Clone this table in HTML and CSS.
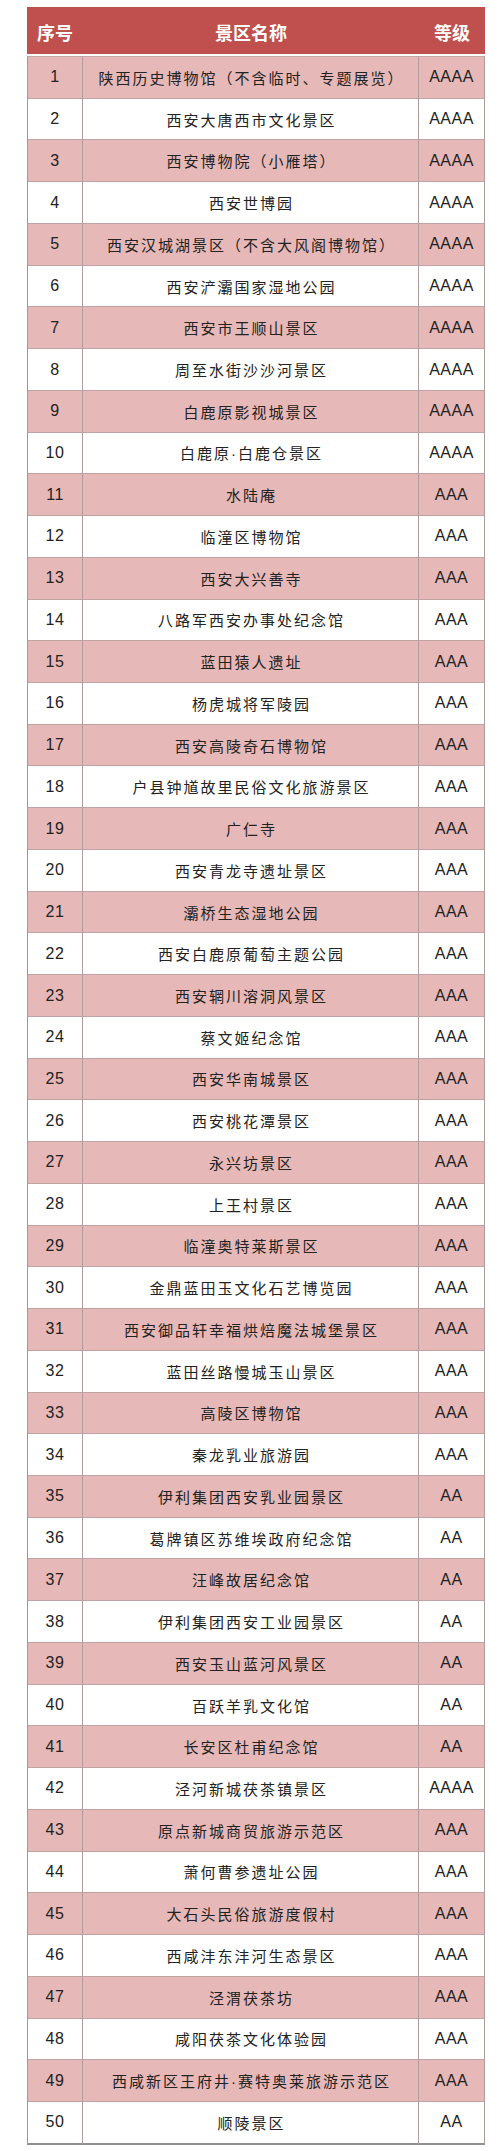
FILE: index.html
```html
<!DOCTYPE html>
<html lang="zh-CN">
<head>
<meta charset="utf-8">
<title>景区名录</title>
<link rel="stylesheet" href="styles.css">
</head>
<body>
<div class="sheet">
  <div class="head">
    <div class="hcell">序号</div>
    <div class="hcell">景区名称</div>
    <div class="hcell">等级</div>
  </div>
  <table class="list">
    <colgroup><col class="c1"><col class="c2"><col class="c3"></colgroup>
    <tbody>
      <tr><td class="num">1</td><td class="name">陕西历史博物馆（不含临时、专题展览）</td><td class="grade">AAAA</td></tr>
      <tr><td class="num">2</td><td class="name">西安大唐西市文化景区</td><td class="grade">AAAA</td></tr>
      <tr><td class="num">3</td><td class="name">西安博物院（小雁塔）</td><td class="grade">AAAA</td></tr>
      <tr><td class="num">4</td><td class="name">西安世博园</td><td class="grade">AAAA</td></tr>
      <tr><td class="num">5</td><td class="name">西安汉城湖景区（不含大风阁博物馆）</td><td class="grade">AAAA</td></tr>
      <tr><td class="num">6</td><td class="name">西安浐灞国家湿地公园</td><td class="grade">AAAA</td></tr>
      <tr><td class="num">7</td><td class="name">西安市王顺山景区</td><td class="grade">AAAA</td></tr>
      <tr><td class="num">8</td><td class="name">周至水街沙沙河景区</td><td class="grade">AAAA</td></tr>
      <tr><td class="num">9</td><td class="name">白鹿原影视城景区</td><td class="grade">AAAA</td></tr>
      <tr><td class="num">10</td><td class="name">白鹿原·白鹿仓景区</td><td class="grade">AAAA</td></tr>
      <tr><td class="num">11</td><td class="name">水陆庵</td><td class="grade">AAA</td></tr>
      <tr><td class="num">12</td><td class="name">临潼区博物馆</td><td class="grade">AAA</td></tr>
      <tr><td class="num">13</td><td class="name">西安大兴善寺</td><td class="grade">AAA</td></tr>
      <tr><td class="num">14</td><td class="name">八路军西安办事处纪念馆</td><td class="grade">AAA</td></tr>
      <tr><td class="num">15</td><td class="name">蓝田猿人遗址</td><td class="grade">AAA</td></tr>
      <tr><td class="num">16</td><td class="name">杨虎城将军陵园</td><td class="grade">AAA</td></tr>
      <tr><td class="num">17</td><td class="name">西安高陵奇石博物馆</td><td class="grade">AAA</td></tr>
      <tr><td class="num">18</td><td class="name">户县钟馗故里民俗文化旅游景区</td><td class="grade">AAA</td></tr>
      <tr><td class="num">19</td><td class="name">广仁寺</td><td class="grade">AAA</td></tr>
      <tr><td class="num">20</td><td class="name">西安青龙寺遗址景区</td><td class="grade">AAA</td></tr>
      <tr><td class="num">21</td><td class="name">灞桥生态湿地公园</td><td class="grade">AAA</td></tr>
      <tr><td class="num">22</td><td class="name">西安白鹿原葡萄主题公园</td><td class="grade">AAA</td></tr>
      <tr><td class="num">23</td><td class="name">西安辋川溶洞风景区</td><td class="grade">AAA</td></tr>
      <tr><td class="num">24</td><td class="name">蔡文姬纪念馆</td><td class="grade">AAA</td></tr>
      <tr><td class="num">25</td><td class="name">西安华南城景区</td><td class="grade">AAA</td></tr>
      <tr><td class="num">26</td><td class="name">西安桃花潭景区</td><td class="grade">AAA</td></tr>
      <tr><td class="num">27</td><td class="name">永兴坊景区</td><td class="grade">AAA</td></tr>
      <tr><td class="num">28</td><td class="name">上王村景区</td><td class="grade">AAA</td></tr>
      <tr><td class="num">29</td><td class="name">临潼奥特莱斯景区</td><td class="grade">AAA</td></tr>
      <tr><td class="num">30</td><td class="name">金鼎蓝田玉文化石艺博览园</td><td class="grade">AAA</td></tr>
      <tr><td class="num">31</td><td class="name">西安御品轩幸福烘焙魔法城堡景区</td><td class="grade">AAA</td></tr>
      <tr><td class="num">32</td><td class="name">蓝田丝路慢城玉山景区</td><td class="grade">AAA</td></tr>
      <tr><td class="num">33</td><td class="name">高陵区博物馆</td><td class="grade">AAA</td></tr>
      <tr><td class="num">34</td><td class="name">秦龙乳业旅游园</td><td class="grade">AAA</td></tr>
      <tr><td class="num">35</td><td class="name">伊利集团西安乳业园景区</td><td class="grade">AA</td></tr>
      <tr><td class="num">36</td><td class="name">葛牌镇区苏维埃政府纪念馆</td><td class="grade">AA</td></tr>
      <tr><td class="num">37</td><td class="name">汪峰故居纪念馆</td><td class="grade">AA</td></tr>
      <tr><td class="num">38</td><td class="name">伊利集团西安工业园景区</td><td class="grade">AA</td></tr>
      <tr><td class="num">39</td><td class="name">西安玉山蓝河风景区</td><td class="grade">AA</td></tr>
      <tr><td class="num">40</td><td class="name">百跃羊乳文化馆</td><td class="grade">AA</td></tr>
      <tr><td class="num">41</td><td class="name">长安区杜甫纪念馆</td><td class="grade">AA</td></tr>
      <tr><td class="num">42</td><td class="name">泾河新城茯茶镇景区</td><td class="grade">AAAA</td></tr>
      <tr><td class="num">43</td><td class="name">原点新城商贸旅游示范区</td><td class="grade">AAA</td></tr>
      <tr><td class="num">44</td><td class="name">萧何曹参遗址公园</td><td class="grade">AAA</td></tr>
      <tr><td class="num">45</td><td class="name">大石头民俗旅游度假村</td><td class="grade">AAA</td></tr>
      <tr><td class="num">46</td><td class="name">西咸沣东沣河生态景区</td><td class="grade">AAA</td></tr>
      <tr><td class="num">47</td><td class="name">泾渭茯茶坊</td><td class="grade">AAA</td></tr>
      <tr><td class="num">48</td><td class="name">咸阳茯茶文化体验园</td><td class="grade">AAA</td></tr>
      <tr><td class="num">49</td><td class="name">西咸新区王府井·赛特奥莱旅游示范区</td><td class="grade">AAA</td></tr>
      <tr><td class="num">50</td><td class="name">顺陵景区</td><td class="grade">AA</td></tr>
    </tbody>
  </table>
</div>
</body>
</html>
```

FILE: styles.css
```css
html, body {
  margin: 0;
  padding: 0;
  background: #ffffff;
}

body {
  font-family: "Liberation Sans", "Noto Sans CJK SC", sans-serif;
  color: #222222;
}

.sheet {
  width: 458px;
  padding-top: 7px;
  margin-left: 27px;
}

.head {
  display: grid;
  grid-template-columns: 56px 336px 66px;
  height: 47px;
  background: #c0504d;
  margin-bottom: 2px;
}

.hcell {
  display: flex;
  align-items: center;
  justify-content: center;
  color: #ffffff;
  font-family: "Noto Sans CJK SC", sans-serif;
  font-weight: 700;
  font-size: 18px;
  padding-top: 3px;
}

.list {
  width: 458px;
  table-layout: fixed;
  border-collapse: separate;
  border-spacing: 0;
}

.c1 { width: 56px; }
.c2 { width: 336px; }
.c3 { width: 66px; }

.list td {
  height: 40.74px;
  padding: 0;
  text-align: center;
  vertical-align: middle;
  border-right: 1px solid #b09a9a;
  border-bottom: 1px solid #bfa3a3;
  white-space: nowrap;
}

.list td:first-child {
  border-left: 1px solid #a89494;
}

.list tr:first-child td {
  border-top: 1px solid #c4a8a8;
}

.list tr:nth-child(odd) td {
  background: #e6b8b7;
}

.list tr:last-child td {
  border-bottom: 2px solid #8f8f8f;
}

.num, .grade {
  font-size: 16px;
  letter-spacing: 0.5px;
  padding-top: 2px;
}

.name {
  font-size: 15px;
  letter-spacing: 2px;
  text-indent: 2px;
}
```
